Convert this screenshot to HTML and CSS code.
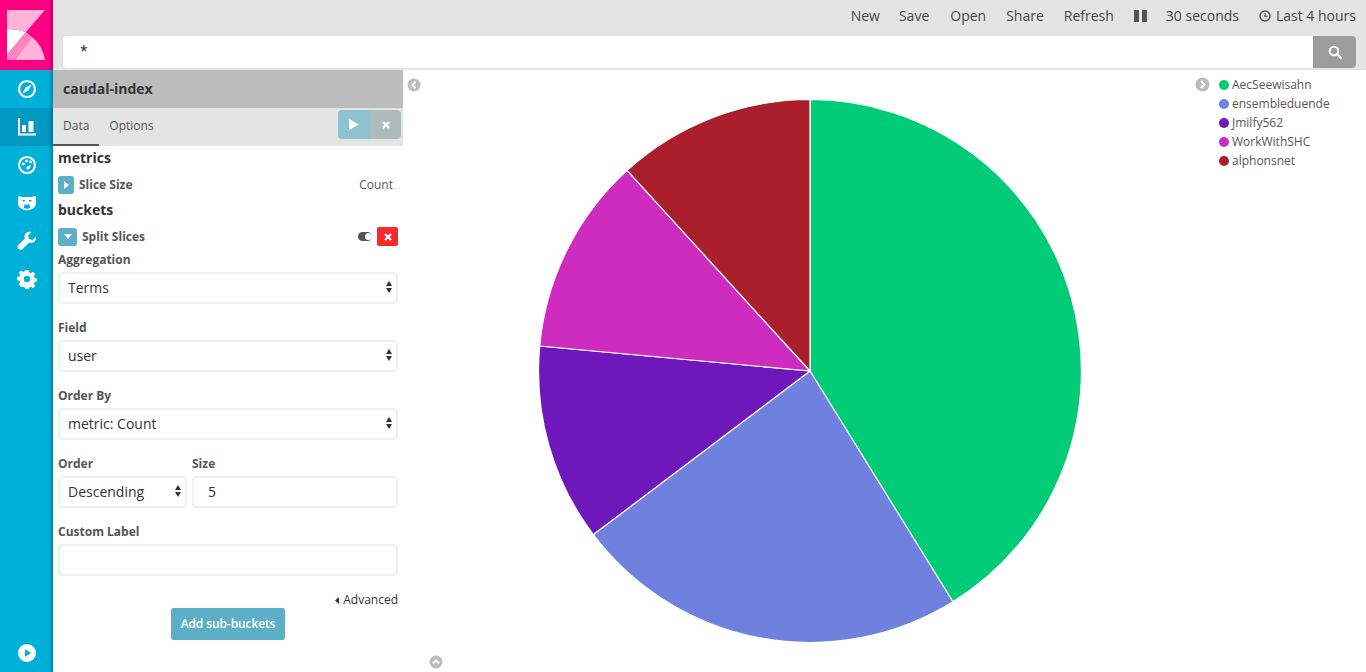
FILE: index.html
```html
<!DOCTYPE html>
<html lang="en">
<head>
<meta charset="utf-8">
<title>caudal-index</title>
<link rel="stylesheet" href="styles.css">
</head>
<body>
<div class="app">
  <nav class="side">
    <div class="logo">
      <svg width="38" height="50" viewBox="7 10 38 50">
        <path d="M7 10H45L26 32Q17 29 7 29Z" fill="#ffb3d9"/>
        <path d="M7 29Q17 29 26 32L7 55Z" fill="#fff"/>
        <path d="M26 32L32 37L15 60H7V55Z" fill="#ff85c2"/>
        <path d="M15 60L32 37Q43 46 45 60Z" fill="#ffb3d9"/>
      </svg>
    </div>
    <a class="nav-item"><svg width="20" height="20" viewBox="0 0 20 20"><circle cx="10" cy="10" r="8" fill="none" stroke="#fff" stroke-width="2.2"/><path d="M14.5 5.5L11.5 11.5L8.5 8.5ZM5.5 14.5L8.5 8.5L11.5 11.5Z" fill="#fff"/></svg></a>
    <a class="nav-item active"><svg width="20" height="20" viewBox="0 0 20 20"><path d="M2 1V17.500H19" fill="none" stroke="#fff" stroke-width="2"/><path d="M5 8h4v7H5zM11.500 4h5v11h-5z" fill="#fff"/></svg></a>
    <a class="nav-item"><svg width="20" height="20" viewBox="0 0 20 20"><circle cx="10" cy="10" r="8" fill="none" stroke="#fff" stroke-width="2.2"/><circle cx="6.500" cy="9" r="1.400" fill="#fff"/><circle cx="9.500" cy="6" r="1.400" fill="#fff"/><circle cx="13.500" cy="7" r="1.400" fill="#fff"/><path d="M14 10L10 11.500Q8.500 13 10 14.500Q12 15 13 13Z" fill="#fff"/></svg></a>
    <a class="nav-item"><svg width="18" height="15" viewBox="0 0 18 15"><path d="M0 1.500Q0 0 1.500 0L4 1H14L16.500 0Q18 0 18 1.500V7Q18 11 14 13Q9 15.500 4 13Q0 11 0 7Z" fill="#fff"/><path d="M4.500 4.800h2.500M11 4.800h2.500" stroke="#00b0d9" stroke-width="1.400"/><path d="M6.500 8.500h5l.8 3.500q-3.300 1.500-6.600 0z" fill="#00b0d9"/></svg></a>
    <a class="nav-item"><svg width="20" height="20" viewBox="0 0 20 20"><path d="M19 5.500L15.500 9L12 8L11 4.500L14.500 1Q10.500 0 8.500 2.500Q7 4.500 7.800 7.500L1 14.500Q0 16 1.200 17.800Q3 19.500 5 18.500L12.300 11.500Q15.500 12.500 17.500 10.800Q19.800 8.800 19 5.500Z" fill="#fff"/></svg></a>
    <a class="nav-item"><svg width="20" height="20" viewBox="0 0 20 20"><path d="M8.300 1h3.400l.5 2.500 1.600.7 2.200-1.400 2.300 2.300-1.400 2.200.7 1.600 2.400.5v3.200l-2.400.5-.7 1.600 1.400 2.200-2.300 2.300-2.200-1.400-1.600.7-.5 2.500H8.300l-.5-2.500-1.600-.7L4 17.800l-2.300-2.300 1.400-2.200-.7-1.600L0 11.200V8l2.400-.5.700-1.600L1.700 3.700 4 1.400l2.200 1.400 1.600-.7zM10 6.700a3.200 3.200 0 1 0 0 6.400 3.200 3.200 0 0 0 0-6.400z" fill="#fff" fill-rule="evenodd"/></svg></a>
    <a class="nav-item nav-bottom"><svg width="18" height="18" viewBox="0 0 18 18"><circle cx="9" cy="9" r="9" fill="#fff"/><path d="M7 5L13 9L7 13Z" fill="#00b0d9"/></svg></a>
  </nav>
  <div class="content">
    <header class="top">
      <div class="menu">
        <span>New</span><span class="mr2">Save</span><span class="mr1">Open</span><span class="mr1">Share</span><span class="mr1">Refresh</span>
        <span class="pause"><i></i><i></i></span>
        <span>30 seconds</span>
        <span class="time"><svg width="12" height="12" viewBox="0 0 12 12"><circle cx="6" cy="6" r="5" fill="none" stroke="#555" stroke-width="1.500"/><path d="M6 3V6.300H8.500" fill="none" stroke="#555" stroke-width="1.200"/></svg>Last 4 hours</span>
      </div>
      <div class="search">
        <div class="query">*</div>
        <div class="search-btn"><svg width="14" height="14" viewBox="0 0 14 14"><circle cx="6" cy="6" r="4.300" fill="none" stroke="#fff" stroke-width="2"/><path d="M9 9L13 13" stroke="#fff" stroke-width="2.400" stroke-linecap="round"/></svg></div>
      </div>
    </header>
    <div class="work">
      <aside class="panel">
        <div class="title">caudal-index</div>
        <div class="tabs">
          <span class="tab current">Data</span><span class="tab">Options</span>
          <div class="run">
            <span class="run-go"><svg width="10" height="11" viewBox="0 0 10 11"><path d="M0 0L10 5.500L0 11Z" fill="#fff"/></svg></span>
            <span class="run-x"><svg width="8" height="8" viewBox="0 0 8 8"><path d="M1 1L7 7M7 1L1 7" stroke="#fff" stroke-width="2.200"/></svg></span>
          </div>
        </div>
        <div class="form">
          <h3>metrics</h3>
          <div class="agg first">
            <span class="toggle"><svg width="5" height="8" viewBox="0 0 5 8"><path d="M0 0L5 4L0 8Z" fill="#fff"/></svg></span>
            <b>Slice Size</b><span class="agg-val">Count</span>
          </div>
          <h3>buckets</h3>
          <div class="agg open">
            <span class="toggle wide"><svg width="8" height="5" viewBox="0 0 8 5"><path d="M0 0H8L4 5Z" fill="#fff"/></svg></span>
            <b>Split Slices</b>
            <span class="switch"><i></i></span>
            <span class="del"><svg width="8" height="8" viewBox="0 0 8 8"><path d="M1 1L7 7M7 1L1 7" stroke="#fff" stroke-width="2.200"/></svg></span>
          </div>
          <label class="lbl">Aggregation</label>
          <div class="sel">Terms<span class="arrows"></span></div>
          <label class="lbl">Field</label>
          <div class="sel">user<span class="arrows"></span></div>
          <label class="lbl">Order By</label>
          <div class="sel">metric: Count<span class="arrows"></span></div>
          <div class="pair">
            <div class="pair-a"><label class="lbl">Order</label><div class="sel">Descending<span class="arrows"></span></div></div>
            <div class="pair-b"><label class="lbl">Size</label><div class="sel num">5</div></div>
          </div>
          <label class="lbl">Custom Label</label>
          <div class="sel"></div>
          <div class="adv"><svg width="4" height="7" viewBox="0 0 4 7"><path d="M4 0V7L0 3.500Z" fill="#333"/></svg>Advanced</div>
          <div class="add-wrap"><span class="add">Add sub-buckets</span></div>
        </div>
      </aside>
      <main class="chart">
        <svg class="pie" viewBox="404 70 962 602" width="962" height="602">
          <g stroke="#fff" stroke-width="1.200">
            <path d="M810 371V99.500A271.500 271.500 0 0 1 952.900 601.800Z" fill="#00cb76"/>
            <path d="M810 371L952.900 601.800A271.500 271.500 0 0 1 593.300 534.600Z" fill="#6f81de"/>
            <path d="M810 371L593.300 534.600A271.500 271.500 0 0 1 539.700 346Z" fill="#6e17bb"/>
            <path d="M810 371L539.700 346A271.500 271.500 0 0 1 627.100 170.400Z" fill="#ce2bbf"/>
            <path d="M810 371L627.100 170.400A271.500 271.500 0 0 1 810 99.500Z" fill="#aa1f2b"/>
          </g>
        </svg>
        <span class="chev chev-left"><svg width="14" height="14" viewBox="0 0 14 14"><circle cx="7" cy="7" r="6.500" fill="#bbb"/><path d="M8.500 3.800L5.300 7L8.500 10.200" fill="none" stroke="#fff" stroke-width="2"/></svg></span>
        <span class="chev chev-up"><svg width="14" height="14" viewBox="0 0 14 14"><circle cx="7" cy="7" r="6.500" fill="#bbb"/><path d="M3.800 8.500L7 5.300L10.200 8.500" fill="none" stroke="#fff" stroke-width="2"/></svg></span>
        <div class="legend">
          <span class="chev-right"><svg width="15" height="15" viewBox="0 0 14 14"><circle cx="7" cy="7" r="6.500" fill="#bbb"/><path d="M5.500 3.800L8.700 7L5.500 10.200" fill="none" stroke="#fff" stroke-width="2"/></svg></span>
          <ul>
            <li><i class="dot d1"></i>AecSeewisahn</li>
            <li><i class="dot d2"></i>ensembleduende</li>
            <li><i class="dot d3"></i>Jmilfy562</li>
            <li><i class="dot d4"></i>WorkWithSHC</li>
            <li><i class="dot d5"></i>alphonsnet</li>
          </ul>
        </div>
      </main>
    </div>
  </div>
</div>
</body>
</html>
```
FILE: styles.css
```css
* { box-sizing: border-box; }
html, body { margin: 0; height: 100%; overflow: hidden; }
body { font-family: "Open Sans", "Noto Sans", sans-serif; font-size: 14px; color: #444; background: #fff; }
.app { display: flex; height: 672px; }

.side { width: 53px; flex: none; background: #00b0d9; display: flex; flex-direction: column; box-shadow: inset -4px 0 3px -2px rgba(0,0,0,.25); position: relative; z-index: 2; }
.logo { height: 70px; background: #ff0080; padding: 10px 8px 10px 7px; box-shadow: inset -4px 0 3px -2px rgba(0,0,0,.25); }
.logo svg { display: block; }
.nav-item { height: 38px; display: flex; align-items: center; justify-content: center; padding-left: 1px; }
.nav-item.active { background: #0099c1; box-shadow: inset -4px 0 3px -2px rgba(0,0,0,.25); }
.nav-bottom { margin-top: auto; }

.content { flex: 1; display: flex; flex-direction: column; min-width: 0; }
.top { height: 70px; background: #e4e4e4; flex: none; display: flex; flex-direction: column; }
.menu { height: 36px; display: flex; justify-content: flex-end; align-items: center; padding: 0 10px 4px 0; gap: 19px; color: #444; line-height: 20px; }
.mr1 { margin-right: 1px; }
.mr2 { margin-right: 2px; }
.pause { display: flex; gap: 3px; }
.pause i { width: 5px; height: 12px; background: #555; display: block; }
.time { display: flex; align-items: center; gap: 5px; margin-left: 1px; }
.search { display: flex; margin: 0 10px; height: 32px; background: #fff; border-radius: 4px; overflow: hidden; }
.query { flex: 1; padding: 5px 0 0 17px; color: #222; line-height: 20px; }
.search-btn { width: 43px; background: #9c9c9c; display: flex; align-items: center; justify-content: center; }

.work { flex: 1; display: flex; min-height: 0; }
.panel { width: 350px; flex: none; font-size: 12px; }
.title { height: 38px; background: #bcbcbc; font-size: 14px; font-weight: 700; color: #333; padding: 9px 10px; line-height: 20px; }
.tabs { height: 38px; background: #e4e4e4; display: flex; position: relative; }
.tab { padding: 0 10px; line-height: 36px; height: 38px; color: #555; }
.tab.current { border-bottom: 2px solid #555; }
.run { position: absolute; right: 2px; top: 2px; display: flex; height: 29px; border-radius: 4px; overflow: hidden; }
.run-go { width: 32px; background: #8cc2d2; display: flex; align-items: center; justify-content: center; }
.run-x { width: 31px; background: #abbcbb; display: flex; align-items: center; justify-content: center; }

.form { padding: 2px 5px 0; }
.form h3 { margin: 0; font-size: 14px; font-weight: 700; color: #333; line-height: 20px; }
.agg { display: flex; align-items: center; height: 19px; margin: 7px 0 6px; color: #555; }
.agg.open { margin-bottom: 4px; }
.agg b { font-weight: 700; margin-left: 5px; }
.toggle { width: 16px; height: 18px; background: #5bafc6; border-radius: 3px; display: flex; align-items: center; justify-content: center; }
.toggle.wide { width: 19px; }
.agg-val { margin-left: auto; margin-right: 5px; color: #555; }
.switch { margin-left: auto; width: 14px; height: 9px; border-radius: 5px; background: #555; position: relative; margin-right: 5px; }
.switch i { position: absolute; right: 0; top: 1px; width: 7px; height: 7px; border-radius: 50%; background: #fff; }
.del { width: 21px; height: 19px; background: #f52a2a; border-radius: 2px; display: flex; align-items: center; justify-content: center; }
.lbl { display: block; font-weight: 700; color: #555; line-height: 20px; margin-bottom: 2px; }
.sel { height: 32px; border: 2px solid #ecf0f1; border-radius: 4px; background: #fff; font-size: 14px; color: #333; line-height: 28px; padding: 0 8px; position: relative; margin-bottom: 14px; }
.num { padding-left: 14px; }
.arrows { position: absolute; right: 4px; top: 7px; width: 0; height: 0; border-left: 3.500px solid transparent; border-right: 3.500px solid transparent; border-bottom: 5px solid #333; }
.arrows::after { content: ""; position: absolute; left: -3.500px; top: 7px; border-left: 3.500px solid transparent; border-right: 3.500px solid transparent; border-top: 5px solid #333; }
.pair { display: flex; gap: 5px; }
.pair-a { width: 129px; flex: none; }
.pair-b { flex: 1; }
.adv { display: flex; justify-content: flex-end; align-items: center; gap: 4px; color: #333; line-height: 18px; margin-top: 15px; }
.add-wrap { display: flex; justify-content: center; margin-top: -1px; }
.add { width: 114px; height: 32px; background: #5bafc6; border-radius: 3px; color: #fff; font-weight: 600; text-align: center; line-height: 31px; letter-spacing: -0.1px; }

.chart { flex: 1; position: relative; min-width: 0; }
.pie { display: block; position: absolute; left: 1px; top: 0; }
.chev { position: absolute; line-height: 0; }
.chev-left { left: 4px; top: 8px; }
.chev-up { left: 26px; bottom: 3px; }
.legend { position: absolute; right: 0; top: 5px; width: 171px; display: flex; font-size: 12px; color: #555; }
.chev-right { line-height: 0; margin: 2px 9px 0 0; }
.legend ul { list-style: none; margin: 0; padding: 0; }
.legend li { display: flex; align-items: center; height: 19px; white-space: nowrap; }
.dot { width: 10px; height: 10px; border-radius: 50%; margin-right: 3px; }
.d1 { background: #00cb76; }
.d2 { background: #6f81de; }
.d3 { background: #6e17bb; }
.d4 { background: #ce2bbf; }
.d5 { background: #aa1f2b; }
```
